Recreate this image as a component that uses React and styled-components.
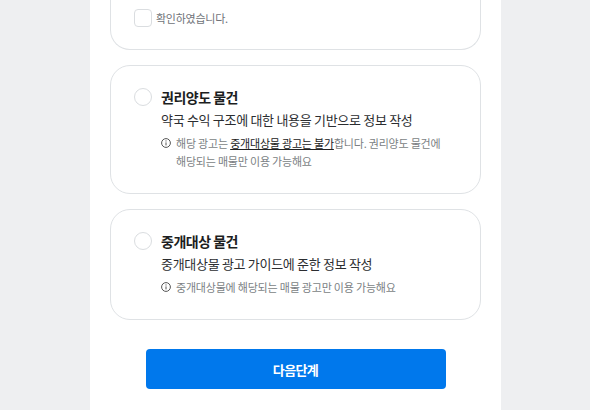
import React from 'react'
import styled, { createGlobalStyle } from 'styled-components'

const GlobalStyle = createGlobalStyle`
	html, body {
		margin: 0;
		height: 100%;
		overflow: hidden;
		background: #eeeff1;
		font-family: "Noto Sans CJK KR", "Noto Sans", sans-serif;
	}
`

const InfoIcon = () => (
	<svg width="10" height="10" viewBox="0 0 10 10" fill="none" stroke="#555" strokeWidth="1">
		<circle cx="5" cy="5" r="4.4" />
		<path d="M5 4.4V7.4M5 2.4V3.5" />
	</svg>
)

const Card = ({ title, desc, children }) => (
	<OptionCard>
		<Radio />
		<Body>
			<Title>{title}</Title>
			<Desc>{desc}</Desc>
			<Note>
				<IconSlot><InfoIcon /></IconSlot>
				<span>{children}</span>
			</Note>
		</Body>
	</OptionCard>
)

const App = () => (
	<Page>
		<GlobalStyle />
		<Panel>
			<ConfirmCard>
				<CheckLabel>
					<Checkbox />
					<span>확인하였습니다.</span>
				</CheckLabel>
			</ConfirmCard>
			<Card title="권리양도 물건" desc="약국 수익 구조에 대한 내용을 기반으로 정보 작성">
				해당 광고는 <Strong>중개대상물 광고는 불가</Strong>합니다. 권리양도 물건에 해당되는 매물만 이용 가능해요
			</Card>
			<Card title="중개대상 물건" desc="중개대상물 광고 가이드에 준한 정보 작성">
				중개대상물에 해당되는 매물 광고만 이용 가능해요
			</Card>
			<NextButton>다음단계</NextButton>
		</Panel>
	</Page>
)

const Page = styled.div`
	height: 410px;
	overflow: hidden;
	padding-left: 90px;
`
const Panel = styled.div`
	box-sizing: border-box;
	width: 411px;
	height: 410px;
	padding: 0 20px;
	background: #fff;
	display: flex;
	flex-direction: column;
	gap: 15px;
`
const ConfirmCard = styled.div`
	box-sizing: border-box;
	height: 50px;
	flex-shrink: 0;
	padding: 9px 23px 0;
	border: 1px solid #dfe2e5;
	border-top: 0;
	border-radius: 0 0 20px 20px;
`
const CheckLabel = styled.label`
	display: flex;
	align-items: center;
	gap: 4px;
	font-size: 11px;
	line-height: 18px;
	letter-spacing: -0.25px;
	color: #6f7378;
`
const Checkbox = styled.span`
	box-sizing: border-box;
	width: 18px;
	height: 18px;
	border: 1px solid #dadde0;
	border-radius: 4px;
`
const OptionCard = styled.div`
	box-sizing: border-box;
	flex-shrink: 0;
	display: flex;
	gap: 9px;
	padding: 21px 23px 23px;
	border: 1px solid #dfe2e5;
	border-radius: 20px;
`
const Radio = styled.span`
	box-sizing: border-box;
	flex-shrink: 0;
	width: 18px;
	height: 18px;
	margin-top: 1px;
	border: 1px solid #dadde0;
	border-radius: 50%;
`
const Body = styled.div`
	flex: 1;
	min-width: 0;
`
const Title = styled.div`
	font-size: 14px;
	line-height: 20px;
	font-weight: 700;
	letter-spacing: -0.5px;
	color: #1c1e21;
`
const Desc = styled.div`
	margin-top: 3px;
	font-size: 13px;
	line-height: 19px;
	letter-spacing: -0.3px;
	color: #2b2d30;
`
const Note = styled.div`
	display: flex;
	gap: 5px;
	margin-top: 5px;
	font-size: 11px;
	line-height: 18px;
	letter-spacing: -0.2px;
	color: #7b7f84;
	word-break: keep-all;
`
const IconSlot = styled.span`
	flex-shrink: 0;
	display: flex;
	align-items: center;
	height: 18px;
`
const Strong = styled.span`
	color: #222;
	text-decoration: underline;
`
const NextButton = styled.button`
	flex-shrink: 0;
	align-self: center;
	width: 300px;
	height: 40px;
	margin-top: 14px;
	border: 0;
	border-radius: 4px;
	background: #0078ec;
	color: #fff;
	font-family: inherit;
	font-size: 13px;
	font-weight: 700;
	letter-spacing: -0.6px;
`

export default App
